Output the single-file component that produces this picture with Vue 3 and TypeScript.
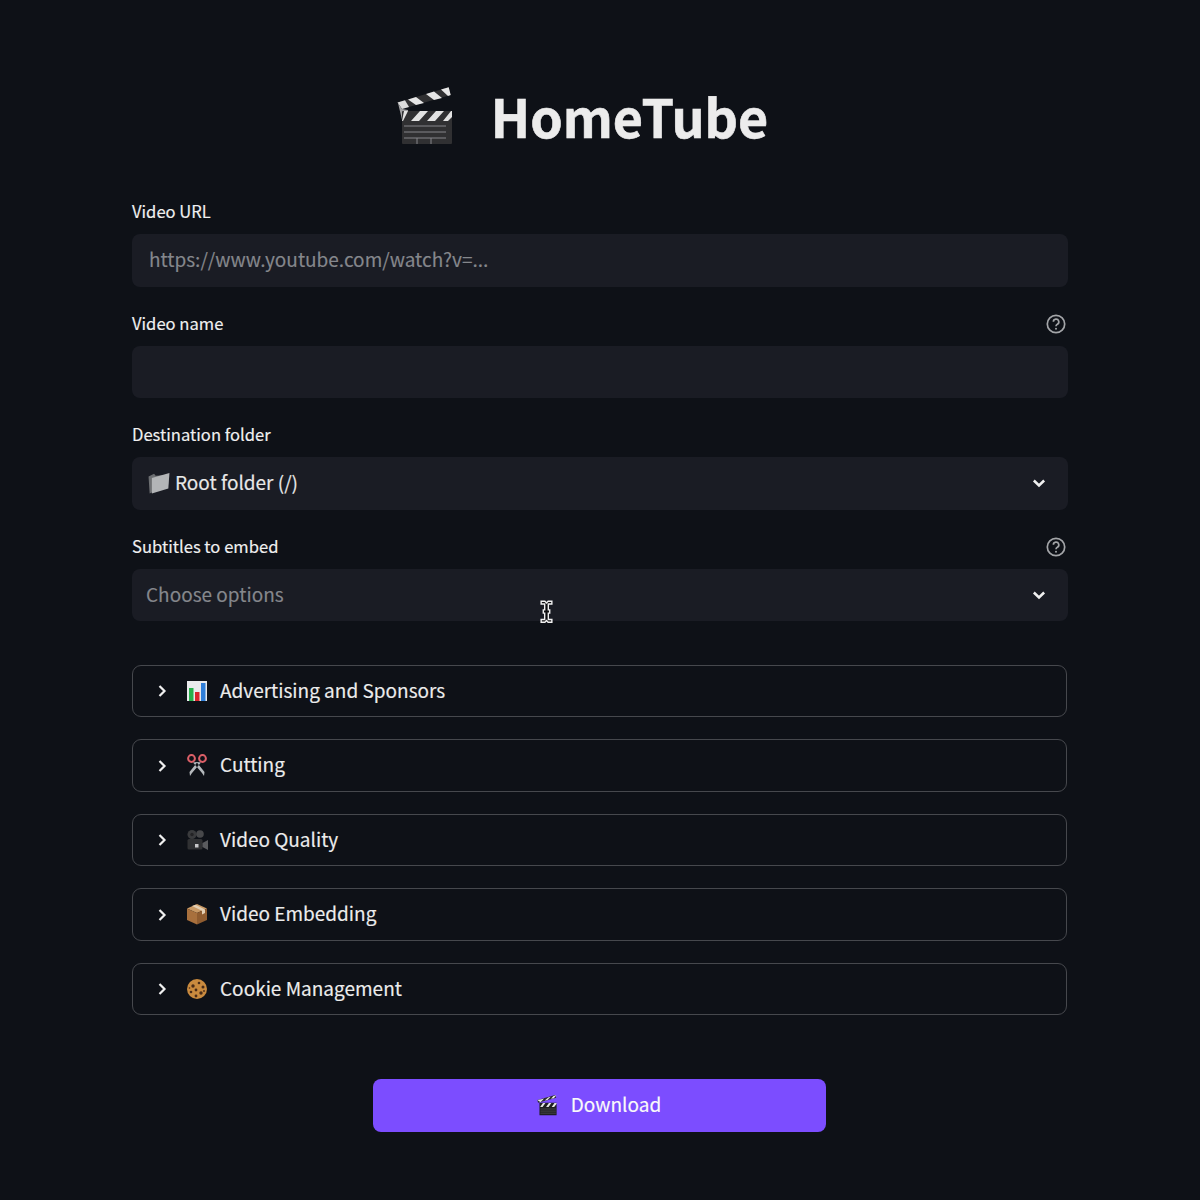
<script setup lang="ts">
const sections = [
  { icon: 'chart', label: 'Advertising and Sponsors' },
  { icon: 'scissors', label: 'Cutting' },
  { icon: 'camera', label: 'Video Quality' },
  { icon: 'box', label: 'Video Embedding' },
  { icon: 'cookie', label: 'Cookie Management' },
]
const chips: [number, number, number][] = [
  [7, 8, 1.7], [13, 5, 1.3], [17, 9, 1.5], [10, 12, 1.4], [5, 14, 1.3], [15, 15, 1.7], [10, 18, 1.4], [18, 13, 0.9], [3.500, 10, 0.8],
]
</script>

<template>
  <main class="page">
    <header class="title">
      <svg class="title-icon" viewBox="0 0 60 60">
        <path d="M1.500 15.500 52.700.3 54.700 8 6 22Z" fill="#303032" />
        <path d="M12 12.500 20 10 28 16 20 18ZM30 7 38 4.500 46 11 38 13ZM45 2.500 52.700.3 54.700 8 52 9Z" fill="#e6e6e6" />
        <path d="M1.500 15.500 9 13.300 13 20 6 22Z" fill="#dcdcdc" />
        <path d="M2 16 8 41 14 38 12 23 6 22Z" fill="#a2a2a4" />
        <rect x="6" y="24" width="50" height="33" rx="1" fill="#303032" />
        <path d="M6 34 8 24h4L7 34ZM15 34 24 24h8l-9 10ZM31 34 40 24h8l-9 10ZM47 34 55 24h1v6l-4 4Z" fill="#e2e2e2" />
        <path d="M8 39h42M8 45h42M8 51h42M21 51v6M35 51v6" stroke="#85858a" stroke-width="1" fill="none" />
      </svg>
      <h1>HomeTube</h1>
    </header>

    <form class="form" @submit.prevent>
      <div class="field">
        <label>Video URL</label>
        <div class="box placeholder url"><span class="txt">https://www.youtube.com/watch?v=...</span></div>
      </div>
      <div class="field">
        <label><span class="lbl">Video name</span>
          <svg class="help" viewBox="0 0 20 20">
            <circle cx="10" cy="10" r="8.700" />
            <path d="M7.400 7.800a2.700 2.700 0 1 1 4 2.400c-.9.500-1.400 1-1.400 2" />
            <circle class="dot" cx="10" cy="14.700" r="1" />
          </svg>
        </label>
        <div class="box"></div>
      </div>
      <div class="field">
        <label>Destination folder</label>
        <div class="box select">
          <span class="value">
            <svg class="folder" viewBox="0 0 20 20">
              <path d="M.5 4 1.500 19.500 5 18 14.500 3 7 3.500 5.500 1.500Z" fill="#6d6f72" />
              <path d="M3.500 5.500 19.500 1 18.500 15 3.500 19.500Z" fill="#b3b5b7" />
            </svg>
            <span class="txt">Root folder (/)</span>
          </span>
          <svg class="chevron" viewBox="0 0 14 14"><path d="M2.500 4.800 7 9.200l4.500-4.400" /></svg>
        </div>
      </div>
      <div class="field">
        <label><span class="lbl">Subtitles to embed</span>
          <svg class="help" viewBox="0 0 20 20">
            <circle cx="10" cy="10" r="8.700" />
            <path d="M7.400 7.800a2.700 2.700 0 1 1 4 2.400c-.9.500-1.400 1-1.400 2" />
            <circle class="dot" cx="10" cy="14.700" r="1" />
          </svg>
        </label>
        <div class="box select placeholder choose">
          <span class="txt">Choose options</span>
          <svg class="chevron" viewBox="0 0 14 14"><path d="M2.500 4.800 7 9.200l4.500-4.400" /></svg>
          <svg class="cursor" viewBox="0 0 14 24">
            <path d="M2 2h3.500L7 3.500 8.500 2H12v2.500H8.700v5.500h1.300v3H8.700v6H12V21.500H8.500L7 20l-1.500 1.500H2V19h3.300v-6H4v-3h1.300V4.500H2Z" fill="#0e0e10" stroke="#f2f2f2" stroke-width="1.300" />
          </svg>
        </div>
      </div>

      <section class="sections">
        <div v-for="s in sections" :key="s.label" class="expander">
          <svg class="arrow" viewBox="0 0 14 14"><path d="M4.500 2 9.500 7l-5 5" /></svg>
          <svg class="emoji" viewBox="0 0 22 22">
            <template v-if="s.icon === 'chart'">
              <rect x="1" y="1" width="20" height="20" fill="#e9eaec" />
              <rect x="3" y="8" width="4.500" height="13" fill="#27b14b" />
              <rect x="9" y="12" width="4.500" height="9" fill="#d9262c" />
              <rect x="15" y="3" width="4.500" height="18" fill="#2f7ed8" />
            </template>
            <template v-else-if="s.icon === 'scissors'">
              <path d="M7 8.500 16 19l2 3 .5-4L10.500 8ZM15 8.500 6 19l-2 3-.5-4L11.500 8Z" fill="#b4b8bc" />
              <circle cx="5.500" cy="4.500" r="3.400" fill="none" stroke="#dd6068" stroke-width="2" />
              <circle cx="16.500" cy="4.500" r="3.400" fill="none" stroke="#dd6068" stroke-width="2" />
            </template>
            <template v-else-if="s.icon === 'camera'">
              <circle cx="6" cy="5.500" r="4.500" fill="#3a3b3d" />
              <circle cx="14" cy="5" r="3.800" fill="#47484a" />
              <circle cx="6" cy="5.500" r="1.700" fill="#232325" />
              <rect x="1.500" y="10" width="15" height="10.500" rx="1.500" fill="#303133" />
              <path d="M16.500 14 22 11v10l-5.500-3Z" fill="#5a5b5e" />
              <rect x="9" y="15" width="3.500" height="3.500" fill="#c8c8ca" />
            </template>
            <template v-else-if="s.icon === 'box'">
              <path d="M11 1 21 5.500 11 10 1 5.500Z" fill="#c99a66" />
              <path d="M1 5.500 11 10v11.500L1 17Z" fill="#a8703d" />
              <path d="M21 5.500 11 10v11.500L21 17Z" fill="#8f5c30" />
              <path d="M6 3 16 7.800v3.700l3-1.400V6.400L9.500 1.800Z" fill="#e3cfb4" />
            </template>
            <template v-else>
              <circle cx="11" cy="11" r="10" fill="#c98a3e" />
              <circle v-for="(c, i) in chips" :key="i" :cx="c[0]" :cy="c[1]" :r="c[2]" fill="#4a2c17" />
            </template>
          </svg>
          <span class="txt">{{ s.label }}</span>
        </div>
      </section>

      <div class="actions">
        <button type="submit" class="download">
          <svg class="btn-icon" viewBox="0 0 60 60">
            <path d="M3 22 1 14 52 0l3 8Z" fill="#2b2b2d" />
            <path d="M1 14 10 21 20 10 13 12ZM22 16 30 14 39 5 32 7ZM40 11 48 9 55 1 47 3Z" fill="#e8e8e8" />
            <rect x="7" y="22" width="49" height="36" rx="1" fill="#1f1f21" />
            <path d="M9 34 17 23h7l-8 11ZM26 34l8-11h7l-8 11ZM42 34l8-11h6v2l-7 9Z" fill="#e4e4e4" />
            <path d="M10 40h44M10 46h44M10 52h44" stroke="#66666a" stroke-width="1.500" />
          </svg>
          <span class="txt btn-txt">Download</span>
        </button>
      </div>
    </form>
  </main>
</template>

<style>
html, body {
  background: #0e1117;
}
</style>

<style scoped>
.page {
  width: 936px;
  height: 1200px;
  margin: 0 auto;
  padding-top: 79px;
  box-sizing: border-box;
  color: #fafafa;
  font-family: "Noto Sans CJK SC", "Noto Sans", sans-serif;
  -webkit-text-stroke: 0.15px currentColor;
}

.title {
  height: 74px;
  display: flex;
  align-items: center;
  justify-content: center;
  gap: 35px;
  padding-right: 34px;
  margin-bottom: 49px;
}

.title-icon {
  width: 60px;
  height: 60px;
  margin-left: -2px;
  margin-top: 2px;
}

h1 {
  margin: 0;
  font-size: 52px;
  font-weight: 700;
  line-height: 74px;
  color: #ececec;
  -webkit-text-stroke: 0.6px #ececec;
}

.field {
  margin-bottom: 27px;
}

label {
  display: flex;
  align-items: flex-start;
  justify-content: space-between;
  height: 20px;
  margin-bottom: 12px;
  font-size: 16.600px;
  line-height: 18px;
  color: #f0f0f0;
}

.help {
  width: 20px;
  height: 20px;
  margin-right: 2px;
  fill: none;
  stroke: #a3a5a8;
  stroke-width: 1.700;
}

.help .dot {
  fill: #a3a5a8;
  stroke: none;
}

.box {
  position: relative;
  height: 52.500px;
  padding: 0 17px;
  border-radius: 8px;
  background: #1a1c24;
  display: flex;
  align-items: center;
  font-size: 19px;
  color: #e8e8e8;
  box-sizing: border-box;
}

.txt {
  margin-bottom: 3px;
}

.placeholder {
  color: #85878c;
}

.select {
  justify-content: space-between;
  padding: 0 21px 0 16px;
}

.choose {
  padding-left: 14px;
}

.value {
  display: flex;
  align-items: center;
  gap: 5px;
}

.folder {
  width: 22px;
  height: 22px;
}

.chevron {
  width: 16px;
  height: 16px;
  fill: none;
  stroke: #f0f0f0;
  stroke-width: 2.200;
}

.cursor {
  position: absolute;
  left: 407px;
  top: 30px;
  width: 15px;
  height: 26px;
}

.sections {
  display: flex;
  flex-direction: column;
  gap: 22px;
  margin-top: 43.500px;
  width: 935px;
}

.expander {
  height: 52.500px;
  box-sizing: border-box;
  border: 1px solid #46484d;
  border-radius: 9px;
  display: flex;
  align-items: center;
  padding-left: 22px;
  font-size: 19px;
  color: #ececec;
}

.arrow {
  width: 14px;
  height: 14px;
  margin-top: 1px;
  fill: none;
  stroke: #f0f0f0;
  stroke-width: 2.200;
}

.emoji {
  width: 22px;
  height: 22px;
  margin-left: 17px;
  margin-right: 12px;
}

.actions {
  display: flex;
  justify-content: center;
  margin-top: 63.500px;
  padding-right: 2px;
}

.download {
  width: 453px;
  height: 53px;
  border: 0;
  border-radius: 8px;
  background: #7c4dff;
  color: #fafafa;
  font: inherit;
  font-size: 19px;
  display: flex;
  align-items: center;
  justify-content: center;
  gap: 13px;
}

.btn-txt {
  margin-bottom: 3px;
}

.btn-icon {
  width: 21px;
  height: 21px;
}
</style>
